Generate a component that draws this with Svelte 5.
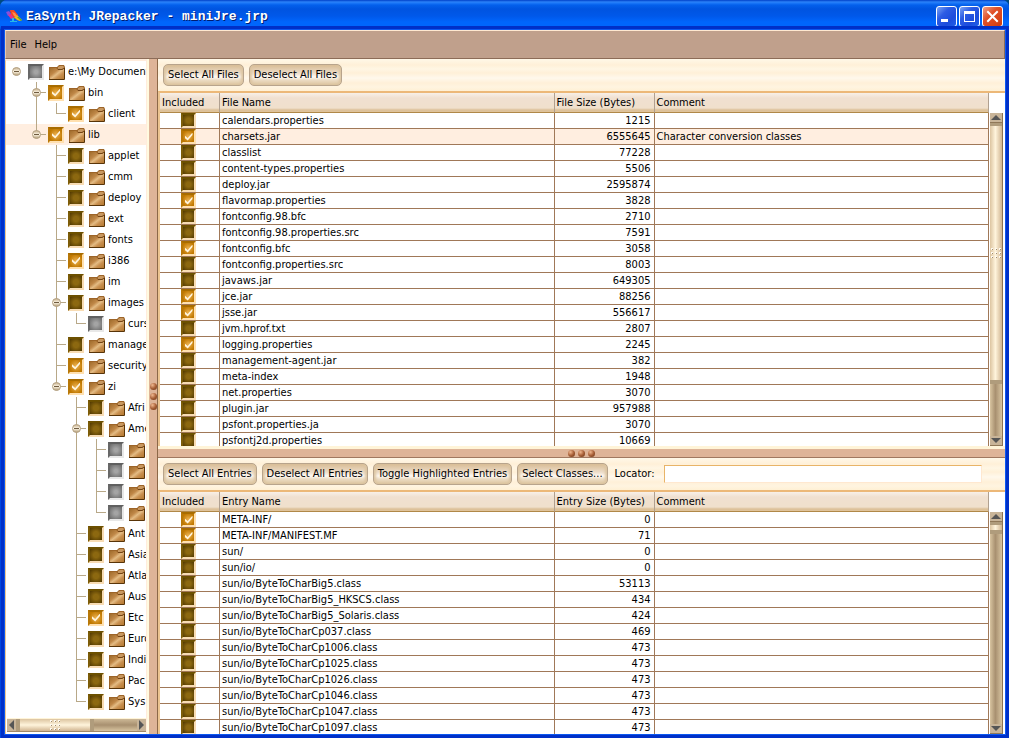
<script>
  // state: 0 - off, 1 - on, 2 - partial
  const tree = [
    {
      name: 'e:\\My Document', state: 2, children: [
        { name: 'bin', state: 1, children: [{ name: 'client', state: 1 }] },
        {
          name: 'lib', state: 1, selected: true, children: [
            { name: 'applet', state: 0 },
            { name: 'cmm', state: 0 },
            { name: 'deploy', state: 0 },
            { name: 'ext', state: 0 },
            { name: 'fonts', state: 0 },
            { name: 'i386', state: 1 },
            { name: 'im', state: 0 },
            { name: 'images', state: 0, children: [{ name: 'curs', state: 2 }] },
            { name: 'manage', state: 0 },
            { name: 'security', state: 1 },
            {
              name: 'zi', state: 1, children: [
                { name: 'Afri', state: 0 },
                {
                  name: 'Ame', state: 0, children: [
                    { name: '', state: 2 },
                    { name: '', state: 2 },
                    { name: '', state: 2 },
                    { name: '', state: 2 },
                  ],
                },
                { name: 'Ant', state: 0 },
                { name: 'Asia', state: 0 },
                { name: 'Atla', state: 0 },
                { name: 'Aus', state: 0 },
                { name: 'Etc', state: 1 },
                { name: 'Euro', state: 0 },
                { name: 'Indi', state: 0 },
                { name: 'Pac', state: 0 },
                { name: 'Sys', state: 0 },
              ],
            },
          ],
        },
      ],
    },
  ];

  // guides: '' blank, 'v' line through, 't' tee, 'l' elbow, 'r' root
  function flatten(nodes, before = null) {
    return nodes.flatMap((node, i) => {
      const last = i === nodes.length - 1;
      const own = before === null ? 'r' : last ? 'l' : 't';
      const guides = [...(before || []), own];
      const next = [...(before || []), last ? '' : 'v'];
      return [{ ...node, guides, open: !!node.children }, ...flatten(node.children || [], next)];
    });
  }
  const rows = flatten(tree);

  const files = [
    ['calendars.properties', 1215, false],
    ['charsets.jar', 6555645, true, 'Character conversion classes'],
    ['classlist', 77228, false],
    ['content-types.properties', 5506, false],
    ['deploy.jar', 2595874, false],
    ['flavormap.properties', 3828, true],
    ['fontconfig.98.bfc', 2710, false],
    ['fontconfig.98.properties.src', 7591, false],
    ['fontconfig.bfc', 3058, true],
    ['fontconfig.properties.src', 8003, false],
    ['javaws.jar', 649305, false],
    ['jce.jar', 88256, true],
    ['jsse.jar', 556617, true],
    ['jvm.hprof.txt', 2807, false],
    ['logging.properties', 2245, true],
    ['management-agent.jar', 382, false],
    ['meta-index', 1948, false],
    ['net.properties', 3070, false],
    ['plugin.jar', 957988, false],
    ['psfont.properties.ja', 3070, false],
    ['psfontj2d.properties', 10669, false],
  ];

  const entries = [
    ['META-INF/', 0, true],
    ['META-INF/MANIFEST.MF', 71, true],
    ['sun/', 0, false],
    ['sun/io/', 0, false],
    ['sun/io/ByteToCharBig5.class', 53113, false],
    ['sun/io/ByteToCharBig5_HKSCS.class', 434, false],
    ['sun/io/ByteToCharBig5_Solaris.class', 424, false],
    ['sun/io/ByteToCharCp037.class', 469, false],
    ['sun/io/ByteToCharCp1006.class', 473, false],
    ['sun/io/ByteToCharCp1025.class', 473, false],
    ['sun/io/ByteToCharCp1026.class', 473, false],
    ['sun/io/ByteToCharCp1046.class', 473, false],
    ['sun/io/ByteToCharCp1047.class', 473, false],
    ['sun/io/ByteToCharCp1097.class', 473, false],
  ];

  let selected = $state('charsets.jar');
  let locator = $state('');
</script>

{#snippet grip()}
  <svg class="grip" width="10" height="10" viewBox="0 0 10 10">
    {#each [0, 4, 8] as y}
      {#each [0, 4, 8] as x}
        <rect {x} {y} width="2" height="2" fill="#fffaf0" />
        <rect x={x + 1} y={y + 1} width="1" height="1" fill="#a08c70" />
      {/each}
    {/each}
  </svg>
{/snippet}

{#snippet balls()}
  {#each [0, 1, 2] as b (b)}
    <span class="ball"></span>
  {/each}
{/snippet}

{#snippet grid(kind, data)}
  <div class="grid">
    <div class="view">
      <table>
        <colgroup><col class="c-inc" /><col /><col class="c-size" /><col /></colgroup>
        <thead>
          <tr><th>Included</th><th>{kind} Name</th><th>{kind} Size (Bytes)</th><th>Comment</th></tr>
        </thead>
        <tbody>
          {#each data as [name, size, on, comment]}
            <tr class:selected={name === selected} onclick={() => (selected = name)}>
              <td class="inc"><input type="checkbox" class="tick" checked={on} aria-label={name} /></td>
              <td>{name}</td>
              <td class="num">{size}</td>
              <td>{comment || ''}</td>
            </tr>
          {/each}
        </tbody>
      </table>
    </div>
    <div class="side">
      <div class="corner"></div>
      <div class="vbar" class:short={kind === 'Entry'}>
        <button class="arrow" aria-label="Scroll up">
          <svg width="10" height="5" viewBox="0 0 10 5"><path d="M5 0L10 5H0z" fill="#555" /></svg>
        </button>
        <div class="vthumb">
          {#if kind === 'File'}{@render grip()}{/if}
        </div>
        <div class="vtrack"></div>
        <button class="arrow" aria-label="Scroll down">
          <svg width="10" height="5" viewBox="0 0 10 5"><path d="M0 0H10L5 5z" fill="#555" /></svg>
        </button>
      </div>
    </div>
  </div>
{/snippet}

<svg class="defs" width="0" height="0" aria-hidden="true">
  <linearGradient id="folder" x1="0" y1="0" x2="1" y2="1">
    <stop offset="0" stop-color="#a06c2c" />
    <stop offset="0.35" stop-color="#c08848" />
    <stop offset="0.52" stop-color="#e4bc84" />
    <stop offset="0.7" stop-color="#c89050" />
    <stop offset="1" stop-color="#b47830" />
  </linearGradient>
  <linearGradient id="knob" x1="0" y1="0" x2="0" y2="1">
    <stop offset="0" stop-color="#c4ac88" />
    <stop offset="0.5" stop-color="#fff8e8" />
    <stop offset="1" stop-color="#b09870" />
  </linearGradient>
</svg>

<div class="window">
  <header class="title">
    <svg class="logo" width="17" height="15" viewBox="0 0 17 15">
      <path d="M4 1l4 0 4 5-3 4-4-4z" fill="#f04820" />
      <path d="M0 3l3-1 2 3-3 2z" fill="#8a50d8" />
      <path d="M2 6l3-1 3 4-3 1z" fill="#e8308c" />
      <path d="M6 3l3 1 2 3-3 0z" fill="#ff8a50" />
      <path d="M8 8l3-2 5 5-2 1-3-1z" fill="#e8b820" />
      <path d="M11 8l2 0 3 3-1 1z" fill="#50a838" />
      <path d="M6 9h2v3h3v1H4v-1h2z" fill="#28b8e8" />
    </svg>
    <h1>EaSynth JRepacker - miniJre.jrp</h1>
    <button class="win" aria-label="Minimize">
      <svg width="19" height="19" viewBox="0 0 19 19"><path d="M4 12h7v3H4z" fill="#fff" /></svg>
    </button>
    <button class="win" aria-label="Maximize">
      <svg width="19" height="19" viewBox="0 0 19 19"><path d="M4 4h11v11H4zM5 7v7h9V7z" fill="#fff" fill-rule="evenodd" /></svg>
    </button>
    <button class="win close" aria-label="Close">
      <svg width="19" height="19" viewBox="0 0 19 19"><path d="M5 5l9 9M14 5l-9 9" stroke="#fff" stroke-width="2" stroke-linecap="square" /></svg>
    </button>
  </header>

  <div class="frame">
    <nav class="menu">
      <button>File</button>
      <button>Help</button>
    </nav>

    <main>
      <aside>
        <div class="tree">
          {#each rows as row}
            <div class="node" class:selected={row.selected}>
              {#each row.guides as g, i}
                <svg class="guide" width="20" height="21" viewBox="0 0 20 21">
                  {#if g === 'v' || g === 't'}<path d="M10.5 0V21" stroke="#b8a888" />{/if}
                  {#if g === 'l'}<path d="M10.5 0V11" stroke="#b8a888" />{/if}
                  {#if g === 't' || g === 'l'}<path d="M10 10.5H20" stroke="#b8a888" />{/if}
                  {#if row.open && i === row.guides.length - 1}
                    <circle cx="10.5" cy="10.5" r="4" fill="url(#knob)" stroke="#b4a284" />
                    <path d="M8 10.5H13" stroke="#705c40" />
                  {/if}
                </svg>
              {/each}
              <label>
                <input type="checkbox" class="tick" class:partial={row.state === 2} checked={row.state === 1} aria-label={row.name || 'folder'} />
                <svg class="folder" width="16" height="15" viewBox="0 0 16 15">
                  <path d="M0 2H8L10 0H15L16 2V14H0z" fill="#9c6428" />
                  <path d="M9 2L11 1H14L15 2V4H9z" fill="#c89860" />
                  <path d="M1 3H7L9 5H13L15 4V14H1z" fill="url(#folder)" />
                  <path d="M9 4.5H13L15 3" fill="none" stroke="#744414" />
                  <path d="M0 14.5H15.5V3" fill="none" stroke="#583408" />
                </svg>
                <span>{row.name}</span>
              </label>
            </div>
          {/each}
        </div>
        <div class="hbar">
          <button class="harrow" aria-label="Scroll left">
            <svg width="5" height="10" viewBox="0 0 5 10"><path d="M5 0V10L0 5z" fill="#555" /></svg>
          </button>
          <div class="hthumb">{@render grip()}</div>
          <div class="htrack"></div>
          <button class="harrow" aria-label="Scroll right">
            <svg width="5" height="10" viewBox="0 0 5 10"><path d="M0 0V10L5 5z" fill="#555" /></svg>
          </button>
        </div>
      </aside>

      <div class="vsplit">{@render balls()}</div>

      <div class="right">
        <section class="files">
          <div class="toolbar">
            <button class="btn">Select All Files</button>
            <button class="btn">Deselect All Files</button>
          </div>
          {@render grid('File', files)}
        </section>
        <div class="hsplit">{@render balls()}</div>
        <section class="entries">
          <div class="toolbar">
            <button class="btn">Select All Entries</button>
            <button class="btn">Deselect All Entries</button>
            <button class="btn">Toggle Highlighted Entries</button>
            <button class="btn">Select Classes...</button>
            <label for="locator">Locator:</label>
            <input id="locator" type="text" bind:value={locator} />
          </div>
          {@render grid('Entry', entries)}
        </section>
      </div>
    </main>
  </div>
</div>

<style>
  :global(body) {
    margin: 0;
    background: #004a80;
  }

  .window {
    display: flex;
    flex-direction: column;
    height: 100vh;
    overflow: hidden;
    box-sizing: border-box;
    border-radius: 7px 7px 0 0;
    background: #0046e0;
    color: #000;
    font: 11px/14px Tahoma, "DejaVu Sans Condensed", "Liberation Sans", sans-serif;
  }
  .window *, .window *::before {
    box-sizing: border-box;
  }
  button {
    font: inherit;
    color: inherit;
    padding: 0;
    margin: 0;
  }
  .defs {
    position: absolute;
  }

  .title {
    flex: none;
    display: flex;
    align-items: center;
    gap: 2px;
    height: 30px;
    padding: 3px 6px 0;
    background: linear-gradient(#0040c8 0, #2c82f8 2px, #1c78f8 3px, #0460ec 5px, #0054e0 9px, #0058ea 16px, #0066fc 22px, #0066fc 26px, #0050dc 29px, #0040c0 30px);
  }
  .title h1 {
    flex: 1;
    margin: 0 0 0 1px;
    color: #fff;
    font: bold 13px/16px "Liberation Mono", monospace;
    text-shadow: 1px 1px #001c70;
  }
  .win {
    display: grid;
    place-items: center;
    width: 21px;
    height: 21px;
    border: 1px solid #fff;
    border-radius: 3px;
    background: linear-gradient(135deg, #7ca4f4, #2c5ce4 35%, #1c4cdc 70%, #2060e8);
  }
  .win.close {
    background: linear-gradient(135deg, #f0a088, #e05028 40%, #d84418 75%, #c83c10);
  }

  .frame {
    flex: 1;
    min-height: 0;
    display: flex;
    flex-direction: column;
    margin: 0 4px 4px 5px;
    box-shadow: 0 0 0 1px #0c58f0, 0 0 0 4px #0030c8;
    background: #fff4e0;
  }

  .menu {
    flex: none;
    display: flex;
    height: 29px;
    gap: 8px;
    padding: 0 4px;
    background: #c0a08c;
    border: 1px solid;
    border-color: #ffe8d0 #8c6c58 #8c6c58 #e8c8b0;
  }
  .menu button {
    border: 0;
    background: none;
  }

  main {
    flex: 1;
    min-height: 0;
    display: flex;
  }
  aside {
    width: 142px;
    flex: none;
    display: flex;
    flex-direction: column;
    background: #fff;
    border-left: 1px solid #f0c890;
    border-right: 1px solid #ffecdc;
    border-top: 2px solid #ffecdc;
  }
  .tree {
    flex: 1;
    overflow: hidden;
  }
  .node {
    display: flex;
    height: 21px;
  }
  .node label {
    display: flex;
    align-items: center;
    padding-left: 2px;
    white-space: nowrap;
  }
  .selected {
    background: #ffeee0;
  }
  .guide, .folder {
    flex: none;
  }
  .folder {
    margin: 2px 3px 0 5px;
  }

  .tick {
    appearance: none;
    display: grid;
    place-items: center;
    flex: none;
    width: 16px;
    height: 16px;
    margin: 0;
    border: 2px solid;
    border-color: #6c5000 #f8dcb4 #f8dcb4 #7c5c08;
    background: radial-gradient(#8c6810 30%, #503800 100%);
  }
  .tick:checked {
    border-color: #a86c00 #ffe0b0 #ffe0b0 #b87808;
    background: radial-gradient(#e8ac48 10%, #c07800 80%);
  }
  .tick:checked::before {
    content: "";
    width: 8px;
    height: 8px;
    background: #fff4dc;
    clip-path: polygon(0 35%, 40% 70%, 100% 0, 100% 30%, 40% 100%, 0 65%);
  }
  .tick.partial {
    border-color: #606060 #e8e8e8 #e8e8e8 #686868;
    background: radial-gradient(#a4a4a4 20%, #686868 100%);
  }

  .hbar {
    display: flex;
    flex: none;
    height: 14px;
    margin: 0 0 2px 1px;
    border-bottom: 1px solid #a08868;
    border-top: 1px solid #fff4d8;
  }
  .harrow {
    display: grid;
    place-items: center;
    width: 9px;
    border: 0;
    background: #c8b498;
  }
  .hthumb {
    display: grid;
    place-items: center;
    width: 78px;
    border: solid #b09c7c;
    border-width: 0 4px;
    background: linear-gradient(#dcc4a0, #fff4dc 50%, #d0b490);
  }
  .htrack {
    flex: 1;
    background: linear-gradient(#cdb896, #a89070 50%, #d8c4a0);
  }

  .vsplit {
    display: flex;
    flex-direction: column;
    flex: none;
    align-items: center;
    justify-content: center;
    gap: 3px;
    width: 11px;
    background: #deb498;
    border-left: 2px solid #fffae0;
    border-right: 1px solid #8c6848;
  }
  .hsplit {
    display: flex;
    flex: none;
    align-items: center;
    justify-content: center;
    gap: 3px;
    height: 12px;
    background: #deb498;
    border-top: 3px solid #fff4d8;
    border-bottom: 1px solid #a07860;
  }
  .ball {
    width: 7px;
    height: 7px;
    border-radius: 50%;
    background: radial-gradient(circle at 35% 30%, #f0b890, #a86038 50%, #643010);
  }

  .right {
    flex: 1;
    min-width: 0;
    display: flex;
    flex-direction: column;
  }
  section {
    display: flex;
    flex-direction: column;
    min-height: 0;
  }
  .files {
    flex: 387 1 0;
  }
  .entries {
    flex: 276 1 0;
  }

  .toolbar {
    display: flex;
    flex: none;
    align-items: center;
    gap: 5px;
    height: 32px;
    padding: 0 23px 0 5px;
    background: linear-gradient(#fff8e8, #fff0d8 6px, #fff6e4 10px, #fff0d8 14px, #fff8ec 19px, #fff0d8 24px, #fff4e0 28px, #fff0d4);
  }
  .toolbar label {
    margin: 0 4px 0 2px;
  }
  .btn {
    height: 22px;
    padding: 0 4px;
    border: 1px solid #b8a48c;
    border-radius: 5px;
    background: linear-gradient(#d8bc94, #ecdcc8 40%, #fffaf4 60%, #ecdcc4 75%, #dcc49c);
    box-shadow: inset 3px 0 3px -1px #dcc4a0, inset -3px 0 3px -1px #dcc4a0;
    white-space: nowrap;
  }
  #locator {
    flex: 1;
    min-width: 0;
    height: 18px;
    border: 1px solid;
    border-color: #e8b468 #ffe8d0 #ffe8d0 #e8b468;
    background: #fff;
    font: inherit;
  }

  .grid {
    flex: 1;
    min-height: 0;
    display: flex;
    border-top: 2px solid #ecb878;
    border-left: 2px solid #ecc490;
    background: #fff;
  }
  .view {
    flex: 1;
    min-width: 0;
    overflow: hidden;
  }
  table {
    width: 100%;
    table-layout: fixed;
    border-collapse: separate;
    border-spacing: 0;
  }
  .c-inc {
    width: 60px;
  }
  .c-size {
    width: 100px;
  }
  th, td {
    padding: 0 3px 0 2px;
    text-align: left;
    font-weight: normal;
    white-space: nowrap;
    overflow: hidden;
    border-right: 1px solid #a07858;
  }
  th {
    height: 20px;
    background: linear-gradient(#f8f0e8, #f0e0d0 5px, #f0e0cc 15px, #dcc098 17px, #e0c49c);
    border-right-color: #b0a090;
    border-bottom: 1px solid #b08848;
  }
  td {
    height: 16px;
    line-height: 14px;
    border-bottom: 1px solid #a07858;
  }
  .num {
    text-align: right;
  }
  .inc {
    padding: 0 0 0 21px;
  }
  .inc .tick {
    width: 15px;
    height: 15px;
  }

  .side {
    display: flex;
    flex-direction: column;
    width: 16px;
    padding: 0 0 0 1px;
  }
  .corner {
    height: 20px;
    flex: none;
  }
  .vbar {
    flex: 1;
    min-height: 0;
    display: flex;
    flex-direction: column;
    width: 13px;
    border-right: 1px solid #8c7454;
  }
  .arrow {
    display: grid;
    place-items: center;
    flex: none;
    height: 10px;
    border: 0;
    border-bottom: 1px solid #907858;
    background: #c8b498;
  }
  .vthumb {
    display: grid;
    place-items: center;
    flex: 261 1 0;
    border: solid #b09c7c;
    border-width: 3px 0 4px;
    background: linear-gradient(90deg, #dcc4a0, #fff4dc 45%, #d0b490);
  }
  .vtrack {
    flex: 53 1 0;
    background: linear-gradient(90deg, #d8c4a0, #a89070 45%, #d8c4a0);
  }
  .short .vthumb {
    flex: 0 0 12px;
  }
</style>
